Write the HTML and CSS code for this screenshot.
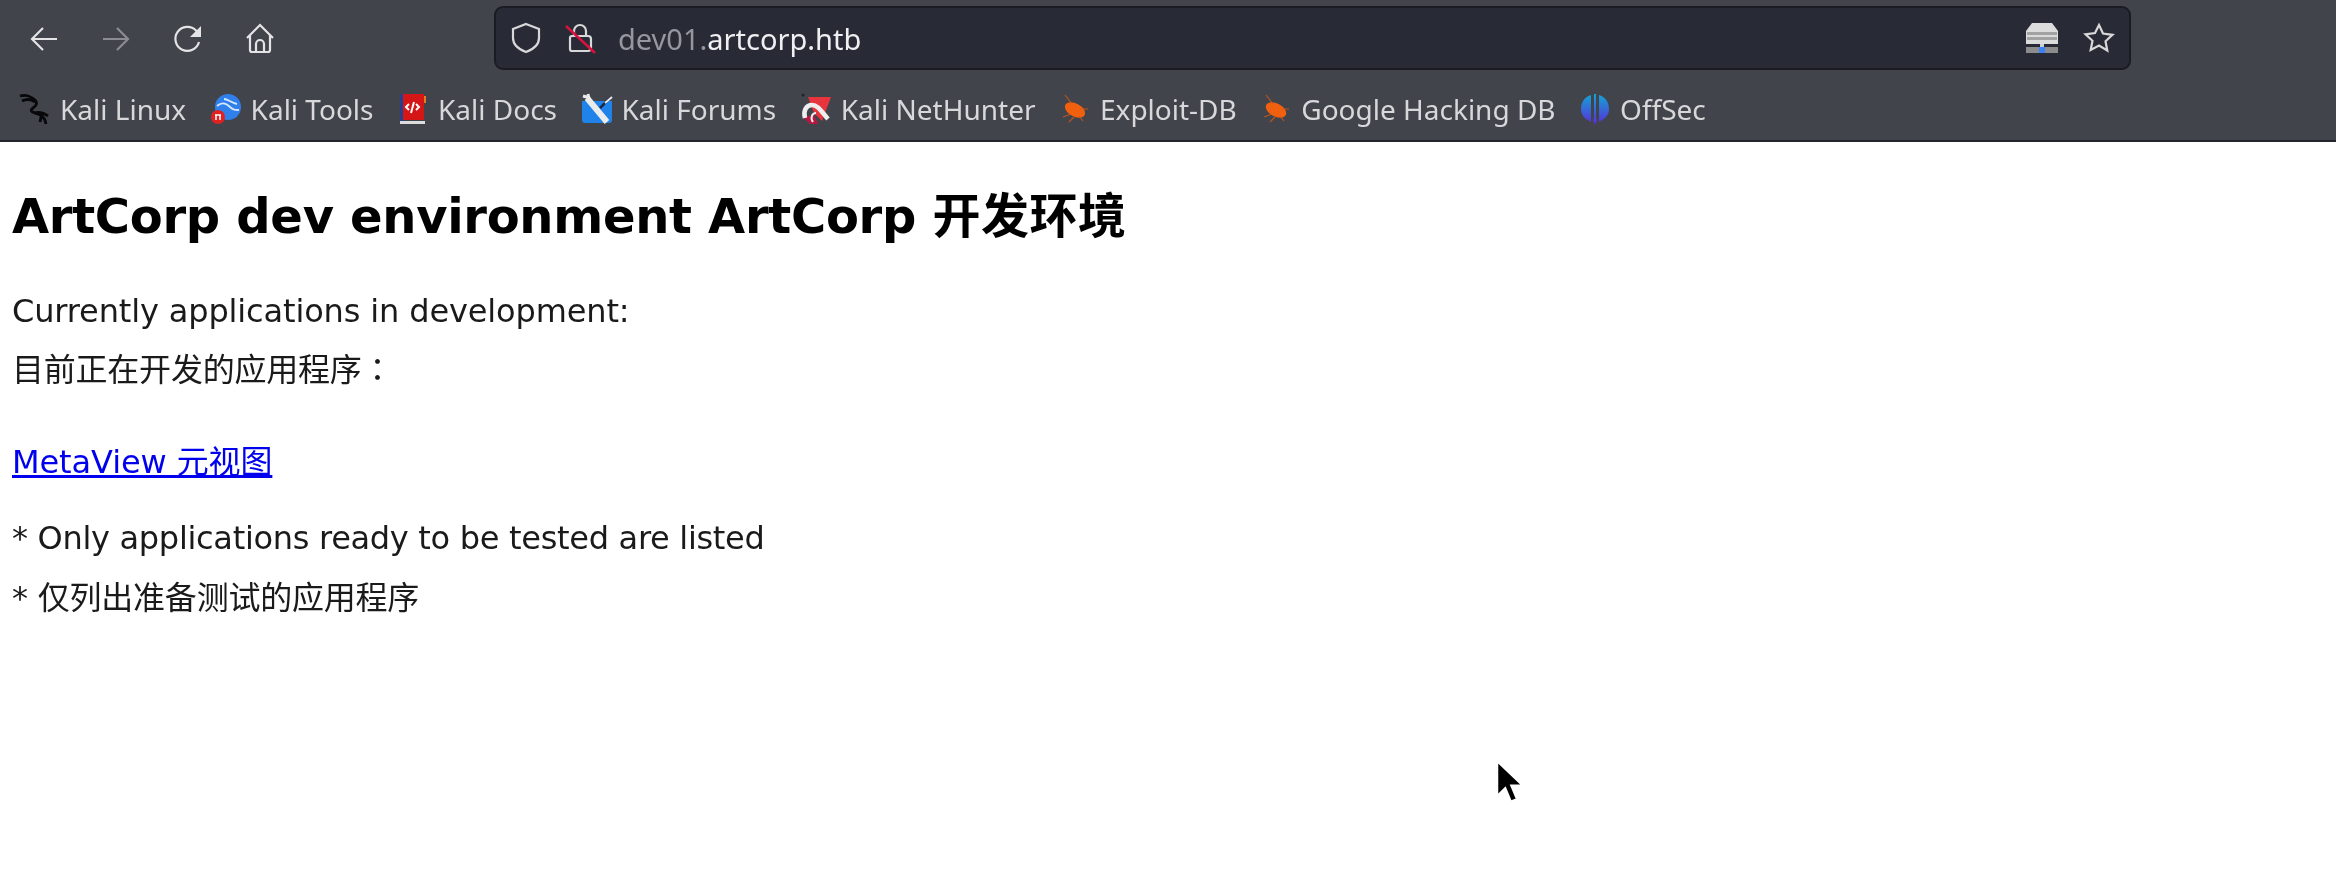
FILE: index.html
```html
<!DOCTYPE html>
<html lang="en">
<head>
<meta charset="utf-8">
<title>ArtCorp dev environment</title>
<link rel="stylesheet" href="styles.css">
</head>
<body>
<header class="chrome">
  <div class="toolbar">
    <div class="nav">
      <svg class="nav-icon" viewBox="0 0 32 32"><path d="M29 16H4M15 5 4 16l11 11"/></svg>
      <svg class="nav-icon dim" viewBox="0 0 32 32"><path d="M3 16h25M17 5l11 11-11 11"/></svg>
      <svg class="nav-icon" viewBox="0 0 32 32"><path d="M27 19a12 12 0 1 1-3-11.500L27 11"/><path class="solid" d="M29 3v11H18z"/></svg>
      <svg class="nav-icon" viewBox="0 0 32 32"><path d="M3 15 16 2l13 13M6 12v15a2 2 0 0 0 2 2h16a2 2 0 0 0 2-2V12M12 29v-8a4 4 0 0 1 8 0v8"/></svg>
    </div>
    <div class="urlbar">
      <svg class="url-icon" viewBox="0 0 32 32"><path d="M16 2 29 7v9c0 7-5 11-13 14C8 27 3 23 3 16V7z"/></svg>
      <svg class="url-icon lock" viewBox="0 0 32 32"><path d="M10 14V9a6 6 0 0 1 12 0v5M6 16a2 2 0 0 1 2-2h16a3 3 0 0 1 3 3v9a3 3 0 0 1-3 3H8a2 2 0 0 1-2-2z"/><path class="slash" d="M2 4l29 27"/></svg>
      <div class="url"><span class="url-sub">dev01.</span>artcorp.htb</div>
      <svg class="drive" viewBox="0 0 34 32"><path fill="#dcdcdc" d="M7 1h20l6 8v13H1V9z"/><path fill="#a2a2a2" d="M2 10h30v3H2zM2 15h30v3H2z"/><path fill="#8c8c8c" d="M1 25h14v6H1zM19 25h14v6H19z"/><path fill="#d0d0d0" d="M15 22h4v3h-4z"/><path fill="#3b82f6" d="M14 25h6v6h-6z"/></svg>
      <svg class="url-icon star" viewBox="0 0 32 32"><path d="M16 3l4 8.500 9.500 1.300-7 6.500 1.800 9.200L16 23.500 7.700 28l1.800-9.200-7-6.500 9.500-1.300z"/></svg>
    </div>
  </div>
  <nav class="bookmarks">
    <a class="bm"><svg class="fav" viewBox="0 0 32 32"><path class="dragon" d="M1 3c6-2 10 0 15 4 3 3 1 6-2 8-3 2-2 4 2 5 6 1 10 4 11 11M3 8c4-2 9-2 13 1M15 20c4-1 10 0 14 3M21 29l1-5"/></svg>Kali Linux</a>
    <a class="bm"><svg class="fav" viewBox="0 0 32 32"><circle cx="18" cy="14" r="13" fill="#2f80ed"/><path d="M7 13c6-5 10-2 13 1s5 3 9 3M14 6c4 0 7 4 13 5" fill="none" stroke="#d7e8fb" stroke-width="1.800"/><circle cx="8" cy="24" r="7" fill="#e22222"/><path d="M5 22h6M6 22v5M10 22v5" stroke="#fff" stroke-width="1.500"/></svg>Kali Tools</a>
    <a class="bm"><svg class="fav" viewBox="0 0 32 32"><path fill="#d41616" d="M4 1h23v26H4z"/><path fill="#24408e" d="M3 1h3v27H3z"/><path fill="#e87a20" d="M27 3h2v7h-2z"/><path fill="#ddd" d="M3 28h25v3H3z"/><path d="M12 11l-3 3 3 3M19 11l3 3-3 3M17 9l-3 11" fill="none" stroke="#fff" stroke-width="2"/></svg>Kali Docs</a>
    <a class="bm"><svg class="fav" viewBox="0 0 32 32"><path fill="#1f83ea" d="M1 8h30v19a3 3 0 0 1-3 3H4a3 3 0 0 1-3-3z"/><path d="M6 5l20 24" stroke="#ececec" stroke-width="6"/><path d="M2 3l7 2M7 1l1 6" stroke="#ececec" stroke-width="3"/><path d="M29 5 19 15" stroke="#1b2a4a" stroke-width="2.500"/><path d="M31 4 24 10" stroke="#e8e8e8" stroke-width="2"/></svg>Kali Forums</a>
    <a class="bm"><svg class="fav" viewBox="0 0 32 32"><path fill="#e8343c" d="M8 4h23L22 28 14 20z"/><path fill="#b81840" d="M3 24l7 7h8l-4-9z"/><path d="M5 25c-2-7 1-13 7-13 6 0 9 6 16 14" fill="none" stroke="#eee" stroke-width="4.500"/><path d="M13 29c-3-4-1-9 3-9" fill="none" stroke="#eee" stroke-width="2"/><circle cx="3" cy="2" r="1.500" fill="#222"/></svg>Kali NetHunter</a>
    <a class="bm"><svg class="fav" viewBox="0 0 32 32"><g class="bug"><ellipse cx="16" cy="17" rx="11" ry="6.500" transform="rotate(28 16 17)"/><path d="M6 2l7 9M4 24l8-3M29 16l-8 0M10 29l5-5M24 28l-4-5"/></g></svg>Exploit-DB</a>
    <a class="bm"><svg class="fav" viewBox="0 0 32 32"><g class="bug"><ellipse cx="16" cy="17" rx="11" ry="6.500" transform="rotate(28 16 17)"/><path d="M6 2l7 9M4 24l8-3M29 16l-8 0M10 29l5-5M24 28l-4-5"/></g></svg>Google Hacking DB</a>
    <a class="bm"><svg class="fav" viewBox="0 0 32 32"><defs><linearGradient id="off" x1="0" y1="0" x2="0" y2="1"><stop offset="0" stop-color="#12a5d6"/><stop offset="1" stop-color="#5b2bd8"/></linearGradient></defs><path fill="url(#off)" d="M12 2C5 4 2 10 2 16s4 10 10 13zM20 2c7 2 10 8 10 14s-4 10-10 13zM15 1h2v24l1 2-2 5-2-5 1-2z"/></svg>OffSec</a>
  </nav>
</header>
<main class="page">
  <h1>ArtCorp dev environment ArtCorp <span class="h1-cjk">开发环境</span></h1>
  <p class="line first">Currently applications in development:</p>
  <p class="line tight">目前正在开发的应用程序<span class="colon" lang="zh-TW">：</span></p>
  <p class="link-row"><a href="#">MetaView 元视图</a></p>
  <p class="line narrow">* Only applications ready to be tested are listed</p>
  <p class="line">* 仅列出准备测试的应用程序</p>
</main>
<svg class="cursor" viewBox="0 0 30 40"><path d="M3 2v30l7-7 5 12 5-2-5-12h10z"/></svg>
</body>
</html>
```

FILE: styles.css
```css
* { box-sizing: border-box; }
html, body { margin: 0; height: 100%; }
body {
  position: relative;
  overflow: hidden;
  background: #fff;
  color: #1a1a1a;
  font-family: "DejaVu Sans", "Noto Sans CJK SC", sans-serif;
}
.chrome {
  height: 142px;
  background: #42444c;
  border-bottom: 2px solid #24252a;
  display: flex;
  flex-direction: column;
  filter: blur(0.6px);
}
.toolbar {
  height: 72px;
  display: flex;
  align-items: center;
  padding-left: 28px;
}
.nav {
  width: 466px;
  display: flex;
  gap: 40px;
  padding-top: 6px;
}
.nav-icon {
  width: 32px;
  height: 32px;
  fill: none;
  stroke: #e4e4e6;
  stroke-width: 2.200;
}
.nav-icon.dim { opacity: .45; }
.nav-icon .solid { fill: #e4e4e6; stroke: none; }
.urlbar {
  width: 1637px;
  height: 64px;
  margin-top: 4px;
  background: #282a35;
  border: 2px solid #1b1c22;
  border-radius: 9px;
  display: flex;
  align-items: center;
  padding: 0 14px;
  color: #f0f0f2;
  font: 29px "Noto Sans", sans-serif;
}
.url-icon {
  width: 32px;
  height: 32px;
  fill: none;
  stroke: #d8d8da;
  stroke-width: 2.200;
  flex: none;
}
.lock { margin-left: 22px; }
.lock .slash { stroke: #d8123f; stroke-width: 2.500; }
.url { margin-left: 22px; flex: 1; }
.url-sub { color: #96979e; }
.drive { width: 34px; height: 32px; flex: none; margin-right: 24px; }
.bookmarks {
  flex: 1;
  display: flex;
  align-items: center;
  gap: 23.500px;
  padding-left: 19px;
  padding-top: 5px;
}
.bm {
  display: flex;
  align-items: center;
  gap: 9px;
  color: #d8d8db;
  font: 28px "Noto Sans", sans-serif;
}
.fav { width: 32px; height: 32px; flex: none; }
.dragon { fill: none; stroke: #08080a; stroke-width: 2.800; }
.bug ellipse { fill: #f0600f; }
.bug path { stroke: #d85a14; stroke-width: 1.200; fill: none; opacity: .8; }
.page { padding: 0 12px; filter: blur(0.5px); }
h1 {
  margin: 46px 0 0;
  font-size: 48px;
  line-height: 56px;
  font-weight: 700;
  color: #000;
  letter-spacing: -0.3px;
}
.h1-cjk { letter-spacing: 0.5px; }
.line {
  margin: 0;
  padding-top: 20px;
  font-size: 32px;
  line-height: 40px;
  letter-spacing: -0.22px;
}
.line.first { padding-top: 47px; letter-spacing: -0.14px; }
.line.tight { padding-top: 16px; }
.line.narrow { letter-spacing: -0.3px; }
.colon { font-family: "Noto Sans CJK TC", sans-serif; }
.link-row {
  margin: 0;
  padding-top: 52px;
  padding-bottom: 16px;
  font-size: 32px;
  line-height: 40px;
  letter-spacing: -0.1px;
}
.link-row a { color: #0000ee; text-decoration: underline; }
.cursor {
  position: absolute;
  left: 1494px;
  top: 759px;
  width: 34px;
  height: 46px;
  fill: #000;
  stroke: #fff;
  stroke-width: 1.500;
  filter: blur(0.7px);
}
```
